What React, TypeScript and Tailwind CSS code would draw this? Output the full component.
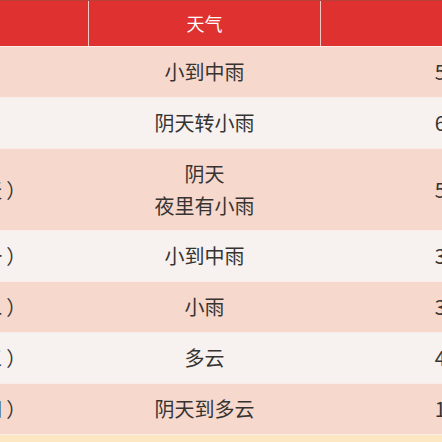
const rows = [
  { day: "今天", weather: ["小到中雨"], temp: "5~12℃", tone: "peach" },
  { day: "明天", weather: ["阴天转小雨"], temp: "6~13℃", tone: "light" },
  { day: "3月10日（星期天\u2009）", weather: ["阴天", "夜里有小雨"], temp: "5~11℃", tone: "peach" },
  { day: "3月11日（星期一\u2009）", weather: ["小到中雨"], temp: "3~10℃", tone: "light" },
  { day: "3月12日（星期二\u2009）", weather: ["小雨"], temp: "3~10℃", tone: "peach" },
  { day: "3月13日（星期三\u2009）", weather: ["多云"], temp: "4~12℃", tone: "light" },
  { day: "3月14日（星期四\u2009）", weather: ["阴天到多云"], temp: "1~11℃", tone: "peach" },
];

export default function App() {
  return (
    <div className="w-[442px] h-[442px] overflow-hidden bg-[#fde7c2] font-['Noto_Sans_CJK_SC','Noto_Sans',sans-serif]">
      <div className="-ml-[213px] w-[826px] flex flex-col">
        <div className="flex h-[46px] bg-[#df3130] border-t border-[#b8403a] text-white text-[18px]">
          <div className="w-[301px]" />
          <div className="w-[233px] flex items-center justify-center border-x border-[#f3c9c4]">天气</div>
          <div className="w-[292px] flex items-center justify-center">温度</div>
        </div>
        {rows.map((r, i) => (
          <div
            key={i}
            className={`flex text-[20px] text-[#363433] border-t border-[#faece6] ${
              r.tone === "peach" ? "bg-[#f6d9cc]" : "bg-[#f7f2ef]"
            } ${r.weather.length > 1 ? "h-[82px]" : "h-[51px]"}`}
          >
            <div className="w-[301px] flex items-center justify-center">{r.day}</div>
            <div className="w-[233px] flex flex-col items-center justify-center leading-[32px]">
              {r.weather.map((w) => (
                <span key={w}>{w}</span>
              ))}
            </div>
            <div className="w-[292px] flex items-center justify-center">{r.temp}</div>
          </div>
        ))}
        <div className="h-[20px] bg-[#fde7c2] border-t border-[#faece6]" />
      </div>
    </div>
  );
}
